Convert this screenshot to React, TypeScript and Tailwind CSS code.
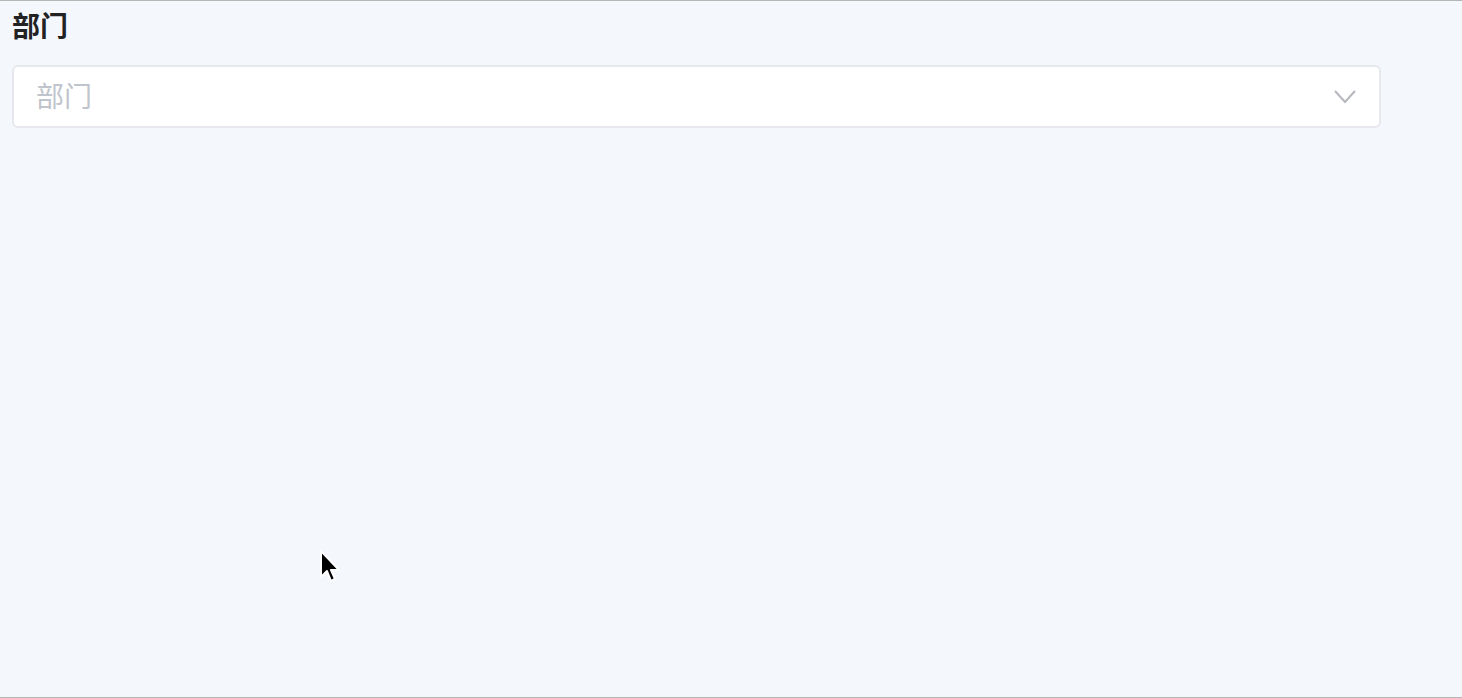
import React from "react";

export default function App() {
  return (
    <div
      className="relative h-[698px] w-full overflow-hidden border-y border-[#b5b5b5] bg-[#f4f7fc]"
      style={{ fontFamily: '"Noto Sans CJK SC", "Noto Sans", sans-serif' }}
    >
      <div className="w-[1381px] pl-3 pt-[2px]">
        {/* Label */}
        <div className="text-[28px] font-bold leading-[44px] text-[#222]">部门</div>

        {/* Select */}
        <div className="mt-[18px] flex h-[63px] items-center justify-between rounded-[6px] border-2 border-[#e6e8ee] bg-white pl-[22px] pr-[22px]">
          <span className="-mt-[3px] text-[28px] text-[#c0c4cc]">部门</span>
          <svg width="24" height="16" viewBox="0 0 24 16" fill="none">
            <path d="M2 2 L12 13 L22 2" stroke="#b4b7bd" strokeWidth="2" />
          </svg>
        </div>
      </div>

      {/* Mouse cursor */}
      <svg
        className="absolute left-[319px] top-[549px]"
        width="24"
        height="36"
        viewBox="0 0 24 36"
      >
        <path
          d="M2 1 L2 27 L8 21 L12 31 L16 29 L12 20 L20 20 Z"
          fill="#000"
          stroke="#fff"
          strokeWidth="2"
          strokeLinejoin="round"
        />
      </svg>
    </div>
  );
}
